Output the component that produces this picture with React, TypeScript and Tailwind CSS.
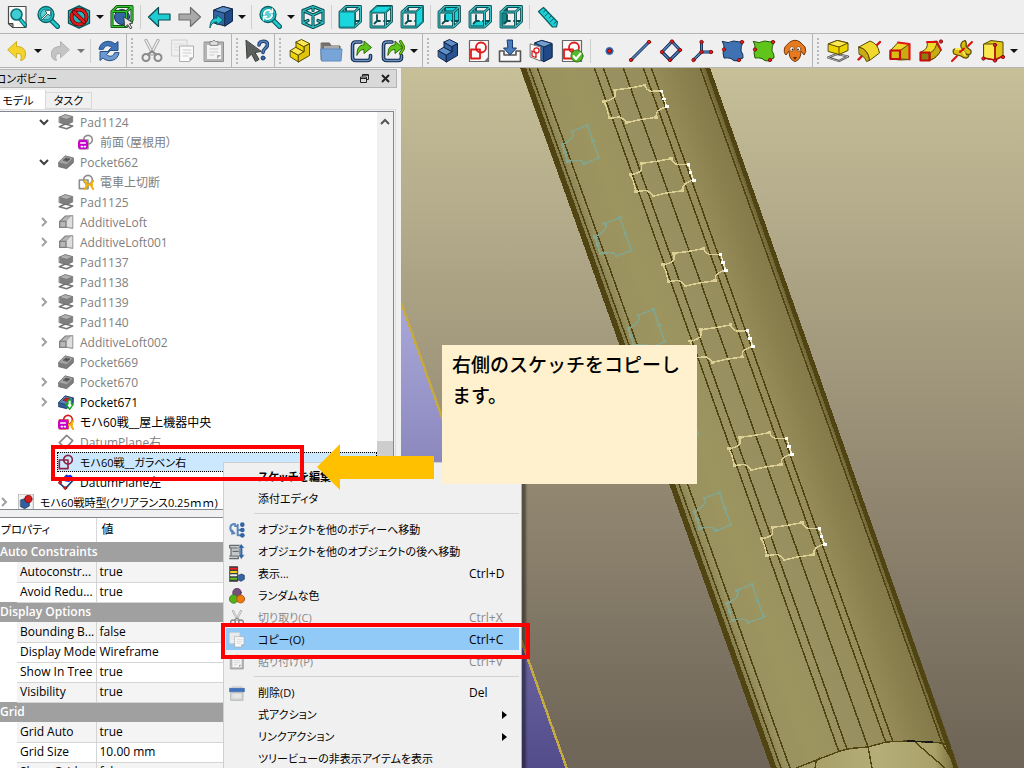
import React from "react";

type Kids = { children?: React.ReactNode };

const Ico = ({ children, s = 24 }: Kids & { s?: number }) => (
  <svg width={s} height={s} viewBox="0 0 24 24" fill="none" strokeLinejoin="round" strokeLinecap="round" aria-hidden="true" className="shrink-0">
    {children}
  </svg>
);

/* ---------- toolbar icons ---------- */

const Lens = () => (
  <>
    <path d="M15 15l6.500 6.500" stroke="#0b5f62" strokeWidth="5" />
    <path d="M15 15l6.500 6.500" stroke="#22c9cf" strokeWidth="2.600" />
    <circle cx="10" cy="9.500" r="8" fill="#1fc4ca" stroke="#0b5f62" strokeWidth="1.300" />
    <circle cx="10" cy="9.500" r="5.500" fill="#5fcfd2" stroke="#0f8084" />
  </>
);

const FitAll = () => (
  <Ico>
    <path d="M3.500 1.500h17.500v21h-13l-4.500-4z" fill="#fbfbfb" stroke="#4b4b4b" strokeWidth="1.200" />
    <path d="M3.500 18.500h4.500v4z" fill="#8c8c8c" stroke="#444" />
    <path d="M15 14l5 6" stroke="#0b5f62" strokeWidth="4" />
    <path d="M15 14l5 6" stroke="#22c9cf" strokeWidth="2" />
    <circle cx="11.500" cy="9.500" r="5.500" fill="#3fcdd2" stroke="#0b6f73" strokeWidth="1.600" />
  </Ico>
);
const FitSel = () => (
  <Ico>
    <Lens />
    <path d="M5.500 13.500l5.500-5.500-2-2 6-1-1 6-2-2-5.500 5.500z" fill="#fff" stroke="#1c4a4c" strokeWidth=".8" />
  </Ico>
);
const DrawStyle = () => (
  <Ico>
    <path d="M12 .8l10.500 5v12.400l-10.500 5-10.500-5v-12.400z" fill="#1fb9bf" stroke="#0b5558" strokeWidth="1.300" />
    <circle cx="12" cy="12" r="7.500" stroke="#5a0000" strokeWidth="4" />
    <circle cx="12" cy="12" r="7.500" stroke="#dc1c1c" strokeWidth="2.600" />
    <path d="M7 7l10 10" stroke="#5a0000" strokeWidth="4" />
    <path d="M7 7l10 10" stroke="#dc1c1c" strokeWidth="2.600" />
  </Ico>
);
const BoxSel = () => (
  <Ico>
    <circle cx="12" cy="12" r="7.500" fill="#3465a4" stroke="#16305a" />
    <path d="M2 6.500h14.500v15h-14.500zM2 6.500l5-5h15l-5.500 5M22 1.500v14l-5.500 6" stroke="#0d3d0d" strokeWidth="3" />
    <path d="M2 6.500h14.500v15h-14.500zM2 6.500l5-5h15l-5.500 5M22 1.500v14l-5.500 6" stroke="#35c434" strokeWidth="1.500" />
    <path d="M14 12l9 6-3.500.8 2.500 4-2 .9-2.200-4-2.800 2.300z" fill="#e9e9e9" stroke="#444" />
  </Ico>
);
const Arrow = ({ flip, fill, stroke }: { flip?: boolean; fill: string; stroke: string }) => (
  <Ico>
    <path
      d={flip ? "M22.500 12l-10-9.500v6.500h-11.500v6h11.500v6.500z" : "M1.500 12l10-9.500v6.500h11.500v6h-11.500v6.500z"}
      fill={fill}
      stroke={stroke}
      strokeWidth="1.200"
    />
  </Ico>
);
const LinkGo = () => (
  <Ico>
    <path d="M5 5l9-3.500 9.500 2.500v12l-7.500 5-11-3z" fill="#3465a4" stroke="#13294d" />
    <path d="M5 5l9-3.500 9.500 2.500-7.500 4z" fill="#5f8fc8" stroke="#13294d" />
    <path d="M16 8l7.500-4v12l-7.500 5z" fill="#204a87" stroke="#13294d" />
    <path d="M1 22.500c0-7 3-9.500 7-9.500v-3l6 5-6 5v-3c-3.500 0-5.500 1.500-7 5.500z" fill="#22c9cf" stroke="#0b5f62" />
  </Ico>
);
const ZoomSync = () => (
  <Ico>
    <Lens />
    <path d="M6 9a4.200 4.200 0 0 1 7-3M14 10a4.200 4.200 0 0 1-7 3" stroke="#fff" strokeWidth="1.800" />
    <path d="M11.500 7.500h3v-3.500M8.500 11.500h-3v3.500" stroke="#fff" strokeWidth="1.400" />
  </Ico>
);
const IsoCube = () => (
  <Ico>
    {[["#0b4c50", 3.2], ["#2fc6cb", 1.2]].map(([c, w]) => (
      <path key={c} d="M12 1.500l10 4v12.500l-10 4.500-10-4.500v-12.500zM2 5.500l10 4.500 10-4.500M12 10v12.500M12 1.500v4M2 18l5-2.500M22 18l-5-2.500" stroke={c as string} strokeWidth={w} />
    ))}
  </Ico>
);
const Cube = ({ face }: { face: string }) => {
  const faces: Record<string, string> = {
    front: "M2 7h14.500v15h-14.500z",
    top: "M2 7l6-5.500h14.500l-6 5.500z",
    right: "M16.500 7l6-5.500v15l-6 5.500z",
    rear: "M8 2h14v14h-14z",
    bottom: "M2 22l6-6h14.500l-6 6z",
    left: "M2 7l6-5.500v15l-6 5.500z",
  };
  const wire = "M2 7h14.500v15h-14.500zM2 7l6-5.500h14.500l-6 5.500M22.500 1.500v15l-6 5.500";
  const hidden = "M8 1.500v4M8 10v6h3M15 16h7M8 16l-2.500 2.500";
  return (
    <Ico>
      {(face === "rear" || face === "left" || face === "bottom") && <path d={faces[face]} fill={face === "left" ? "#0f8b90" : "#18d3da"} />}
      <path d={hidden} stroke="#0b4c50" strokeWidth="1.800" />
      <path d={wire} stroke="#0b4c50" strokeWidth="2.800" />
      <path d={wire} stroke="#3cc3c8" strokeWidth="1.100" />
      {(face === "front" || face === "top" || face === "right") && <path d={faces[face]} fill="#1bd6dd" stroke="#0d7f84" strokeWidth="1" />}
    </Ico>
  );
};
const Ruler = () => (
  <Ico>
    <path d="M2.500 6.500l5-4 14 14.500-1 5h-4z" fill="#1dd0d8" stroke="#0b5f62" strokeWidth="1.200" />
    <path d="M10 5l-2.500 2M12.500 8l-3.500 3M15.500 10.500l-2.500 2.500M18 13.500l-3.500 3M20.500 16.500l-2.500 2" stroke="#0b5f62" />
  </Ico>
);
const Undo = ({ c = "#f4d32a", e = "#cfae1a", flip }: { c?: string; e?: string; flip?: boolean }) => (
  <Ico>
    <g transform={flip ? "matrix(-1 0 0 1 24 0)" : undefined}>
      <path d="M3 10.500l8.500-8v5c7 0 10.500 4 8.500 11-1 2-2.500 2.500-4.500 3 2-5 0-7.500-4-7v4z" fill={c} stroke={e} />
    </g>
  </Ico>
);
const Refresh = () => (
  <Ico>
    <path d="M2 10c1-8 11-10 16-5l3-2.500v9h-9.500l3-3c-3-3-7-2-8 1.500z" fill="#3f74b8" stroke="#264f87" />
    <path d="M22 14c-1 8-11 10-16 5l-3 2.500v-9h9.500l-3 3c3 3 7 2 8-1.500z" fill="#6c9ad0" stroke="#264f87" />
  </Ico>
);
const Cut = ({ s }: { s?: number }) => (
  <Ico s={s}>
    <path d="M6 1.500l7 13.500M18 1.500l-7 13.500" stroke="#aaa" strokeWidth="3.200" />
    <path d="M6 1.500l7 13.500M18 1.500l-7 13.500" stroke="#eee" strokeWidth="1.400" />
    <circle cx="6" cy="18.500" r="3.500" stroke="#8a8a8a" strokeWidth="2" />
    <circle cx="18" cy="18.500" r="3.500" stroke="#8a8a8a" strokeWidth="2" />
    <path d="M8 15.500l4-3.500 4 3.500" stroke="#8a8a8a" strokeWidth="2" />
  </Ico>
);
const Copy = ({ s }: { s?: number }) => (
  <Ico s={s}>
    <path d="M1 1h15v16h-15z" fill="#efefef" stroke="#cfcfcf" />
    <path d="M3.500 5h10M3.500 8h7M3.500 11h7" stroke="#ddd" />
    <path d="M9 7h13.500v11.500l-4 4h-9.500z" fill="#fafafa" stroke="#adadad" />
    <path d="M12 11h8M12 14h8M12 17h5" stroke="#ccc" />
    <path d="M18.500 22.500v-4h4z" fill="#aaa" />
  </Ico>
);
const Paste = ({ s }: { s?: number }) => (
  <Ico s={s}>
    <path d="M2.500 3h19v19.500h-19z" fill="#b5b5b5" stroke="#8e8e8e" />
    <path d="M5 6h14v14h-14z" fill="#f4f4f4" />
    <path d="M8 6v-3.500h2.500l1.500-1.500 1.500 1.500h2.500v3.500z" fill="#ddd" stroke="#888" />
    <path d="M8 10h8M8 13h8M8 16h4" stroke="#ccc" />
    <path d="M15 20v-4h4z" fill="#aaa" />
  </Ico>
);
const WhatsThis = () => (
  <Ico>
    <path d="M1 1.500l1 18 4.500-4.500 4 7.500 3.500-2-4-7 6-1z" fill="#5b605c" stroke="#3b3f3c" />
    <path d="M14 6c0-5 8.500-5 8.500-.5 0 3.500-4.500 4-4.500 8" stroke="#1d3c6e" strokeWidth="3.600" />
    <path d="M14 6c0-5 8.500-5 8.500-.5 0 3.500-4.500 4-4.500 8" stroke="#5182bd" strokeWidth="1.600" />
    <circle cx="18" cy="19" r="2" fill="#3465a4" stroke="#1d3c6e" />
  </Ico>
);
const Step = ({ a, b, c, e }: { a: string; b: string; c: string; e: string }) => (
  <Ico>
    <path d="M2.500 11.500l8 4.500v7l-8-5z" fill={b} stroke={e} />
    <path d="M10.500 16l5.500-3.500v-5l5.500-3v12l-11 6.500z" fill={a} stroke={e} />
    <path d="M2.500 11.500l5.500-3.500 8 4.500-5.500 3.500z" fill={c} stroke={e} />
    <path d="M8 8v-5l8 4.500v5z" fill={b} stroke={e} />
    <path d="M8 3l5.500-2.500 8 4-5.500 3z" fill={c} stroke={e} />
  </Ico>
);
const Folder = () => (
  <Ico>
    <path d="M2.500 4h8l1.500 3h9v14h-18.500z" fill="#76726b" stroke="#66625c" />
    <path d="M5 7h15v4h-15z" fill="#a9a9a9" />
    <path d="M2 10h21l-1 12h-19z" fill="#78a4d8" stroke="#5e8cc4" />
  </Ico>
);
const LinkOut = ({ dbl }: { dbl?: boolean }) => (
  <Ico>
    <path d="M11 3h-5q-3.500 0-3.500 3.500v12q0 3 3.500 3h11q3.500 0 3.500-3v-2" stroke="#13294d" strokeWidth="3.600" />
    <path d="M11 3h-5q-3.500 0-3.500 3.500v12q0 3 3.500 3h11q3.500 0 3.500-3v-2" stroke="#6b93c5" strokeWidth="1.400" />
    <path d="M7 16c0-7 2-10 7-10v-4l7.500 6.500-7.500 6v-4c-3 0-4.500 1.500-7 5.500z" fill="#5fc51a" stroke="#2b6a05" />
    {dbl && <path d="M19.500 2.500l3.500 6-3.500 6" stroke="#2b6a05" strokeWidth="3" />}
    {dbl && <path d="M19.500 2.500l3.500 6-3.500 6" stroke="#73d216" strokeWidth="1.300" />}
  </Ico>
);
const Sheet = ({ ok }: { ok?: boolean }) => (
  <Ico>
    <path d="M2.500 1.500h19v21h-19z" fill="#fafafa" stroke="#666" strokeWidth="1.200" />
    <path d="M17 22.500l4.500-5v5z" fill="#777" />
    <path d="M4 10.500h9v9h-9z" stroke="#e01b1b" strokeWidth="1.800" />
    <circle cx="14" cy="8.500" r="5" stroke="#e01b1b" strokeWidth="1.800" />
    {ok && <circle cx="17" cy="17" r="6" fill="#56b82c" stroke="#2f7b12" />}
    {ok && <path d="M13.500 17l2.500 3 4.500-5.500" stroke="#fff" strokeWidth="2" />}
  </Ico>
);
const Import = () => (
  <Ico>
    <path d="M6 12h-4.500v10.500h21v-10.500h-4.500v4h-12z" fill="#fafafa" stroke="#555" strokeWidth="1.600" />
    <path d="M9.500 1h5v8h4l-6.500 7-6.500-7h4z" fill="#4a7dbd" stroke="#1d3c6e" />
  </Ico>
);
const MapSketch = () => (
  <Ico>
    <path d="M6 4l7-2.500 10 3v14l-8 4-9-3z" fill="#3465a4" stroke="#13294d" />
    <path d="M15 8l8-3.500v14l-8 4z" fill="#204a87" stroke="#13294d" />
    <path d="M6 4l9 4 8-3.500-10-3z" fill="#729fcf" stroke="#13294d" />
    <path d="M1.500 5l10 3v14l-10-4z" fill="#fafafa" stroke="#777" />
    <path d="M3 12l4 1.500v5l-4-1.500z" stroke="#e01b1b" strokeWidth="1.300" />
    <circle cx="7.500" cy="11.500" r="2.600" stroke="#e01b1b" strokeWidth="1.300" />
  </Ico>
);
const Dot = ({ x, y, r = 1.7 }: { x: number; y: number; r?: number }) => <circle cx={x} cy={y} r={r} fill="#e52020" stroke="#7a0707" strokeWidth=".8" />;
const DPoint = () => (
  <Ico>
    <circle cx="12.500" cy="12" r="3.600" fill="#2f5ea0" stroke="#3d70b4" />
    <Dot x={12.5} y={12} r={2} />
  </Ico>
);
const DLine = () => (
  <Ico>
    <path d="M3.500 20.500l17-17" stroke="#13294d" strokeWidth="3" />
    <path d="M3.500 20.500l17-17" stroke="#5486c4" strokeWidth="1.500" />
    <Dot x={3} y={21} />
    <Dot x={21} y={3} />
  </Ico>
);
const DPlane = () => (
  <Ico>
    <path d="M13 2.500l8 8.500-10 10-8-8z" stroke="#13294d" strokeWidth="3.200" />
    <path d="M13 2.500l8 8.500-10 10-8-8z" stroke="#5486c4" strokeWidth="1.400" />
    <Dot x={13} y={2.5} />
    <Dot x={21} y={11} />
    <Dot x={11} y={21} />
    <Dot x={3} y={13} />
  </Ico>
);
const DCs = () => (
  <Ico>
    <path d="M11.500 13v-10M11.500 13h10M11.500 13l-8 8" stroke="#13294d" strokeWidth="3" />
    <path d="M11.500 13v-10M11.500 13h10M11.500 13l-8 8" stroke="#5486c4" strokeWidth="1.300" />
    <Dot x={11.5} y={3} />
    <Dot x={21} y={13} />
    <Dot x={3.5} y={21} />
    <Dot x={11.5} y={13} />
  </Ico>
);
const Binder = ({ c, e }: { c: string; e: string }) => (
  <Ico>
    <path d="M1.500 2.500q6 2.500 11-.5 5 1 9.500 1-2.500 5-2 9 2.500 3 2 7-3.500.5-4 3-6 .5-8-2.500-3-1-7-.5-2-6 0-9 .5-3-1.500-7.500z" fill={c} stroke={e} />
    <Dot x={21} y={3} />
    <Dot x={3} y={10.5} />
    <Dot x={18} y={21} />
  </Ico>
);
const Sheep = () => (
  <Ico>
    <path d="M7 3q5-3.500 10 0l5 5q2 5-1 8l-3-4q0 9-6 10.500-6-1.500-6-10.500l-3 4q-3-3-1-8z" fill="#e87a1d" stroke="#70350a" />
    <circle cx="9" cy="10" r="2.300" fill="#fff" stroke="#70350a" strokeWidth=".6" />
    <circle cx="15.500" cy="10" r="2.300" fill="#fff" stroke="#70350a" strokeWidth=".6" />
    <circle cx="9.500" cy="10.500" r=".9" fill="#222" />
    <circle cx="15" cy="10.500" r=".9" fill="#222" />
    <path d="M10 18h4l-2 3z" fill="#5a2a08" />
  </Ico>
);
const Pad = () => (
  <Ico>
    <path d="M2 18.500l9-3.500 11 2.500-9 4.500z" stroke="#444" strokeWidth="2.200" />
    <path d="M2 18.500l9-3.500 11 2.500-9 4.500z" stroke="#ccc" strokeWidth=".8" />
    <path d="M2.500 5l9-3.500 10.500 2.500v7.500l-9 4-10.500-3z" fill="#edd400" stroke="#5a4a02" />
    <path d="M2.500 5l10.500 3 9-4-10.500-2.500zM13 8v7.500" fill="#fce94f" stroke="#5a4a02" />
  </Ico>
);
const Revolve = () => (
  <Ico>
    <path d="M1.500 20.500l5-5" stroke="#d11" strokeWidth="2.400" />
    <path d="M19 7l4-4" stroke="#d11" strokeWidth="2.400" />
    <path d="M2 8l11-6q8 2.500 9.500 12l-10 7.500q-1-11-10.500-13.500z" fill="#f0d92c" stroke="#5a4a02" />
    <path d="M2 8q9.500 2.500 10.500 13.500l-3 1q-2.500-6-7-7z" fill="#c9ab12" stroke="#5a4a02" />
  </Ico>
);
const Loft = () => (
  <Ico>
    <path d="M2.500 11.500l7.500-8 11.500 1.500v15.500l-9 .5-10-1z" fill="#f0d92c" stroke="#5a4a02" />
    <path d="M12 11.500l9.500-6.500v15.500l-9.500-.5z" fill="#c9ab12" stroke="#5a4a02" />
    <path d="M10 3.500l11.500 1.500v15.500" stroke="#e01b1b" strokeWidth="2.200" />
    <path d="M2.500 11.500h9.500v8.500h-9.500z" fill="#d8bb14" stroke="#c40d0d" strokeWidth="2.200" />
  </Ico>
);
const Pipe = () => (
  <Ico>
    <path d="M2 13q8-3 6-10l10-1q1 7 4 9-4 8-11 10.500z" fill="#f0d92c" stroke="#5a4a02" />
    <path d="M18 3q1 6 4 8-4 8-11 10v-7q6-3 7-11z" fill="#c9ab12" stroke="#5a4a02" />
    <path d="M8 3h10l4 8" stroke="#d11" strokeWidth="1.800" />
    <path d="M1.500 13.500h9v8h-9z" fill="#8f7a10" stroke="#c40d0d" strokeWidth="2.200" />
    <Dot x={22} y={2.5} />
  </Ico>
);
const Helix = () => (
  <Ico>
    <path d="M4 15q-3-5 3-5.500l12 7q-2 5-8 .5zM11 8q-1-5 4-6.500 2 2 1 6l5 4q1 5-5 4z" fill="#d9bc16" stroke="#5a4a02" strokeWidth="1.200" />
    <path d="M6 10q6-1 9 6" stroke="#fce94f" strokeWidth="2" />
    <path d="M2 22l5-5M10 13l4-3.500M18 7l4-4" stroke="#d11" strokeWidth="2" />
  </Ico>
);
const Prim = () => (
  <Ico>
    <path d="M3 5l7-3.500 12 1.500v14l-8 4-11-2z" fill="#e0c51a" stroke="#5a4a02" />
    <path d="M3 5h11v16l-11-2z" fill="#fce94f" stroke="#5a4a02" />
    <path d="M14 5v16l-11-2M14 21l8-4" stroke="#b50f0f" strokeWidth="1.600" />
    <Dot x={14} y={6} />
    <Dot x={2.5} y={19.5} />
    <Dot x={14} y={21.5} />
    <Dot x={22} y={18} />
  </Ico>
);

/* ---------- toolbar parts ---------- */

const Tool = ({ label, children }: Kids & { label: string }) => (
  <button type="button" aria-label={label} className="flex h-8 w-[31px] shrink-0 items-center justify-center">
    {children}
  </button>
);
const Drop = ({ dim }: { dim?: boolean }) => (
  <button type="button" aria-label="more" className="flex h-8 w-3 shrink-0 items-center justify-center">
    <svg width="8" height="4" viewBox="0 0 8 4" aria-hidden="true">
      <path d="M0 0h8l-4 4z" fill={dim ? "#777" : "#111"} />
    </svg>
  </button>
);
const Sep = () => (
  <div className="flex h-6 w-[6px] shrink-0 justify-center">
    <div className="w-px bg-[#cfcfcf]" />
  </div>
);
const Grip = () => (
  <div className="flex h-full w-3 shrink-0 items-center gap-1 pl-[2px]">
    <div className="h-full w-px bg-[#b4b4b4]" />
    <div className="flex flex-col gap-[2px]">
      {Array.from({ length: 7 }, (_, i) => (
        <div key={i} className="h-[2px] w-[2px] bg-[#b9b9b9]" />
      ))}
    </div>
  </div>
);

const Toolbars = () => (
  <header className="shrink-0 bg-[#efefef]">
    <div className="flex h-[34px] items-center border-b border-[#b4b4b4] pl-px">
      <Tool label="Fit all"><FitAll /></Tool>
      <Tool label="Fit selection"><FitSel /></Tool>
      <Tool label="Draw style"><DrawStyle /></Tool>
      <Drop />
      <Tool label="Box selection"><BoxSel /></Tool>
      <Sep />
      <Tool label="Back"><Arrow fill="#1fccd3" stroke="#0b4c50" /></Tool>
      <Tool label="Forward"><Arrow flip fill="#a9a9a9" stroke="#6f6f6f" /></Tool>
      <Tool label="Go to linked object"><LinkGo /></Tool>
      <Drop />
      <Sep />
      <Tool label="Sync view"><ZoomSync /></Tool>
      <Drop />
      <Tool label="Isometric"><IsoCube /></Tool>
      <Sep />
      <Tool label="Front"><Cube face="front" /></Tool>
      <Tool label="Top"><Cube face="top" /></Tool>
      <Tool label="Right"><Cube face="right" /></Tool>
      <Sep />
      <Tool label="Rear"><Cube face="rear" /></Tool>
      <Tool label="Bottom"><Cube face="bottom" /></Tool>
      <Tool label="Left"><Cube face="left" /></Tool>
      <Sep />
      <Tool label="Measure"><Ruler /></Tool>
    </div>
    <div className="flex h-[34px] items-center border-b border-[#b4b4b4] pl-px">
      <Tool label="Undo"><Undo /></Tool>
      <Drop />
      <Tool label="Redo"><Undo flip c="#c4c4c4" e="#b0b0b0" /></Tool>
      <Drop dim />
      <Sep />
      <Tool label="Refresh"><Refresh /></Tool>
      <Grip />
      <Tool label="Cut"><Cut /></Tool>
      <Tool label="Copy"><Copy /></Tool>
      <Tool label="Paste"><Paste /></Tool>
      <Grip />
      <Tool label="What's this"><WhatsThis /></Tool>
      <Grip />
      <Tool label="Part"><Step a="#dfc30c" b="#edd400" c="#fce94f" e="#5a4a02" /></Tool>
      <Tool label="Group"><Folder /></Tool>
      <Tool label="Make link"><LinkOut /></Tool>
      <Tool label="Make sub-link"><LinkOut dbl /></Tool>
      <Drop />
      <Grip />
      <Tool label="Body"><Step a="#27528f" b="#3465a4" c="#5f8fc8" e="#0f2345" /></Tool>
      <Tool label="New sketch"><Sheet /></Tool>
      <Tool label="Import"><Import /></Tool>
      <Tool label="Map sketch"><MapSketch /></Tool>
      <Tool label="Validate sketch"><Sheet ok /></Tool>
      <Sep />
      <Tool label="Datum point"><DPoint /></Tool>
      <Tool label="Datum line"><DLine /></Tool>
      <Tool label="Datum plane"><DPlane /></Tool>
      <Tool label="Local coordinates"><DCs /></Tool>
      <Tool label="Shape binder"><Binder c="#3f72b2" e="#142b52" /></Tool>
      <Tool label="Sub-shape binder"><Binder c="#5fc51a" e="#235a05" /></Tool>
      <Tool label="Clone"><Sheep /></Tool>
      <Grip />
      <Tool label="Pad"><Pad /></Tool>
      <Tool label="Revolution"><Revolve /></Tool>
      <Tool label="Loft"><Loft /></Tool>
      <Tool label="Pipe"><Pipe /></Tool>
      <Tool label="Helix"><Helix /></Tool>
      <Tool label="Primitive"><Prim /></Tool>
      <Drop />
    </div>
  </header>
);

/* ---------- model tree ---------- */

const TPad = () => (
  <Ico s={16}>
    <path d="M2 19l9-4 11 3-9 4z" stroke="#777" strokeWidth="2.400" />
    <path d="M2 5l9-4 11 3v8l-9 4-11-3z" fill="#7f7f7f" stroke="#6a6a6a" />
    <path d="M2 5l11 3 9-4-11-3z" fill="#b0b0b0" stroke="#777" />
  </Ico>
);
const TPocket = ({ live }: { live?: boolean }) => (
  <Ico s={16}>
    <path d="M1 13l10-10 12 3v7l-10 9-12-3z" fill={live ? "#2f5f9f" : "#7d7d7d"} stroke={live ? "#16305a" : "#6a6a6a"} strokeWidth="1.200" />
    <path d="M1 13l12 3 10-10-12-3z" fill={live ? "#5f86b5" : "#a5a5a5"} stroke={live ? "#16305a" : "#777"} />
    <path d="M8 9l4-3 6 1.500-4 3.500z" fill={live ? "#d11f1f" : "#555"} stroke={live ? "#900" : "#555"} />
    {live && <path d="M15 9h5v6h3l-5.500 8-5.500-8h3z" fill="#fff" stroke="#10a81c" strokeWidth="2" />}
  </Ico>
);
const TLoft = () => (
  <Ico s={16}>
    <path d="M2.500 11l8.500-8 11-.5v19l-10-1.500h-9.500z" fill="#b5b5b5" stroke="#858585" strokeWidth="1.600" />
    <path d="M12 11l7-8h3v18l-10-1.500z" fill="#dedede" stroke="#999" />
    <path d="M2.500 11h9.500v9h-9.500z" fill="#b8b8b8" stroke="#808080" strokeWidth="2" />
  </Ico>
);
const TSketch = ({ c, kind }: { c: string; kind?: "mag" | "gold" | "both" }) => (
  <Ico s={16}>
    <path d="M2 9h13v13h-13z" stroke={c} strokeWidth="2.400" />
    <circle cx="15" cy="8.500" r="6.500" stroke={c} strokeWidth="2.400" />
    {(kind === "gold" || kind === "both") && <path d="M10 10q6 6 0 13M23 10q-6 6 0 13M12 16h9" stroke="#f2b10a" strokeWidth="3.200" />}
    {(kind === "mag" || kind === "both") && (
      <>
        <rect x="0" y="8.500" width="15" height="14.500" rx="5" fill="#c800c8" />
        <path d="M4 13.500h7M5 19h1.500M9.500 19h1.500" stroke="#fff" strokeWidth="2.400" />
      </>
    )}
  </Ico>
);
const TPlane = ({ live }: { live?: boolean }) => (
  <Ico s={16}>
    <path d="M13 2l9 8-11 12-9-9z" fill="#fff" stroke={live ? "#27427a" : "#8a8a8a"} strokeWidth="2.600" />
    {live && <path d="M12 3l7-2 3 3-5 8-7-1z" fill="#0b2bff" />}
    {live && <><Dot x={3} y={13} r={2.2} /><Dot x={11} y={21} r={2.2} /></>}
  </Ico>
);
const TBody = () => (
  <Ico s={16}>
    <path d="M1 0h22v24h-22z" fill="#f2f2f2" stroke="#8a8a8a" />
    <path d="M4 9l6-2 7 3v8l-7 4-6-3z" fill="#2f5f9f" stroke="#16305a" />
    <circle cx="15.500" cy="7.500" r="5.500" fill="#d11f1f" stroke="#700" />
  </Ico>
);
const Chevron = ({ open }: { open?: boolean }) => (
  <svg width="10" height="10" viewBox="0 0 10 10" fill="none" aria-hidden="true">
    <path d={open ? "M1 3l4 4 4-4" : "M3 1l4 4-4 4"} stroke={open ? "#404040" : "#a0a0a0"} strokeWidth="2" />
  </svg>
);

type Node = { t: string; icon: React.ReactNode; lvl?: number; chev?: "o" | "c"; live?: boolean; sel?: boolean; kana?: boolean };
const nodes: Node[] = [
  { t: "Pad1124", icon: <TPad />, chev: "o" },
  { t: "前面（屋根用）", icon: <TSketch c="#8d8d8d" kind="mag" />, lvl: 2 },
  { t: "Pocket662", icon: <TPocket />, chev: "o" },
  { t: "電車上切断", icon: <TSketch c="#8d8d8d" kind="gold" />, lvl: 2 },
  { t: "Pad1125", icon: <TPad /> },
  { t: "AdditiveLoft", icon: <TLoft />, chev: "c" },
  { t: "AdditiveLoft001", icon: <TLoft />, chev: "c" },
  { t: "Pad1137", icon: <TPad /> },
  { t: "Pad1138", icon: <TPad /> },
  { t: "Pad1139", icon: <TPad />, chev: "c" },
  { t: "Pad1140", icon: <TPad /> },
  { t: "AdditiveLoft002", icon: <TLoft />, chev: "c" },
  { t: "Pocket669", icon: <TPocket /> },
  { t: "Pocket670", icon: <TPocket />, chev: "c" },
  { t: "Pocket671", icon: <TPocket live />, chev: "c", live: true },
  { t: "モハ60戦__屋上機器中央", icon: <TSketch c="#d11f1f" kind="both" />, live: true },
  { t: "DatumPlane右", icon: <TPlane /> },
  { t: "モハ60戦__ガラベン右", icon: <TSketch c="#8c2340" />, live: true, sel: true, kana: true },
  { t: "DatumPlane左", icon: <TPlane live />, live: true },
  { t: "モハ60戦時型(クリアランス0.25ｍｍ)", icon: <TBody />, lvl: 0, chev: "c", live: true, kana: true },
];
const indents = ["-ml-[6px]", "ml-[34px]", "ml-[54px]"];

const Tree = () => (
  <div className="flex h-[399px] border border-l-0 border-[#828790] bg-white">
    <ul className="min-w-0 flex-1 overflow-hidden">
      {nodes.map((n) => (
        <li key={n.t} className={`flex h-5 items-center ${n.live ? "text-black" : "text-[#808080]"}`}>
          <span className={`mr-[3px] flex w-5 shrink-0 justify-center ${indents[n.lvl ?? 1]}`}>{n.chev && <Chevron open={n.chev === "o"} />}</span>
          <span className={`flex h-5 min-w-0 flex-1 items-center gap-[6px] border border-dotted ${n.sel ? "border-black bg-[#cce8ff]" : "border-transparent"}`}>
            {n.icon}
            <span className={`pt-[2px] whitespace-nowrap ${n.kana ? "text-[11px]" : ""}`}>{n.t}</span>
          </span>
        </li>
      ))}
    </ul>
    <div className="flex w-4 shrink-0 flex-col items-center bg-[#f0f0f0]">
      <svg width="10" height="18" viewBox="0 0 10 18" fill="none" aria-hidden="true">
        <path d="M1 12l4-4 4 4" stroke="#555" strokeWidth="2" />
      </svg>
      <div className="mt-[311px] h-[34px] w-full bg-[#cdcdcd]" />
    </div>
  </div>
);

/* ---------- properties ---------- */

const props: [string, string?][] = [
  ["Auto Constraints"],
  ["Autoconstr...", "true"],
  ["Avoid Redu...", "true"],
  ["Display Options"],
  ["Bounding B...", "false"],
  ["Display Mode", "Wireframe"],
  ["Show In Tree", "true"],
  ["Visibility", "true"],
  ["Grid"],
  ["Grid Auto", "true"],
  ["Grid Size", "10.00 mm"],
  ["Show Grid", "false"],
];
const striped = ["Autoconstr...", "Bounding B...", "Visibility", "Grid Auto", "Show Grid"];

const Properties = () => (
  <div className="mt-[7px] min-h-0 flex-1 overflow-hidden border-t border-r border-[#828790] bg-white">
    <table className="w-full table-fixed border-collapse text-black">
      <colgroup>
        <col className="w-[17px]" />
        <col className="w-[79px]" />
        <col />
      </colgroup>
      <thead>
        <tr className="h-6">
          <th colSpan={2} className="border-r border-[#d8d8d8] p-0 pl-px text-left text-[11px] font-normal">プロパティ</th>
          <th className="p-0 pl-[5px] text-left font-normal">値</th>
        </tr>
      </thead>
      <tbody>
        {props.map(([k, v]) =>
          v === undefined ? (
            <tr key={k} className="h-5 bg-[#a0a0a0] text-white">
              <th colSpan={3} className="p-0 text-left leading-4 font-semibold">{k}</th>
            </tr>
          ) : (
            <tr key={k} className="h-5">
              <td className="bg-white p-0" />
              <td className={`border-r border-b border-[#d4d4d4] p-0 pl-[3px] leading-4 whitespace-nowrap ${striped.includes(k) ? "bg-[#f4f4f4]" : "bg-white"}`}>{k}</td>
              <td className={`border-b border-[#d4d4d4] p-0 pl-[3px] leading-4 ${striped.includes(k) ? "bg-[#f4f4f4]" : "bg-white"}`}>{v}</td>
            </tr>
          ),
        )}
      </tbody>
    </table>
  </div>
);

const ComboView = () => (
  <aside className="flex w-[401px] shrink-0 flex-col overflow-hidden bg-[#f0f0f0] pt-px pr-1">
    <div className="flex h-[19px] shrink-0 items-center border border-l-0 border-[#b4b4b4] bg-[#d9d9d9] pr-[6px]">
      <h2 className="-ml-1 flex-1 pt-px text-[11px] whitespace-nowrap text-black">コンボビュー</h2>
      <button type="button" aria-label="Float" className="mr-3">
        <svg width="9" height="9" viewBox="0 0 9 9" fill="none" stroke="#222" aria-hidden="true">
          <path d="M2.500 2.500v-2h6v5h-2M.5 3h6v5.500h-6zM.5 4.500h6M2.500 1.200h6" />
        </svg>
      </button>
      <button type="button" aria-label="Close">
        <svg width="9" height="9" viewBox="0 0 9 9" stroke="#222" strokeWidth="2" aria-hidden="true">
          <path d="M1 1l7 7M8 1l-7 7" />
        </svg>
      </button>
    </div>
    <div role="tablist" className="mt-[2px] flex h-[19px] shrink-0 items-end text-[11px] text-black">
      <button type="button" role="tab" aria-selected="true" className="h-[19px] w-[46px] border-r border-[#d9d9d9] bg-white pt-[2px] pr-[9px] text-center leading-4">モデル</button>
      <button type="button" role="tab" aria-selected="false" className="h-[17px] w-[46px] border border-l-0 border-[#d9d9d9] text-center leading-4">タスク</button>
    </div>
    <div className="mr-px flex min-h-0 flex-1 flex-col border-t border-r border-[#dcdcdc] pt-px pr-px">
      <div className="shrink-0"><Tree /></div>
      <Properties />
    </div>
  </aside>
);

/* ---------- 3D view ---------- */

const creamAt = [[312, 107], [392, 327], [489, 597], [570, 826], [687, 1149], [785, 1419]];
const tealAt = [[262, 178], [360, 455], [460, 730], [559, 1005], [658, 1279], [756, 1555]];

const View3D = () => (
  <main className="min-w-0 flex-1 overflow-hidden bg-linear-to-b from-[#c6bf98] via-[#9b9178] to-[#6e6457]">
    <svg className="h-full w-full" viewBox="401 68 623 700" preserveAspectRatio="xMinYMin slice" fill="none" shapeRendering="crispEdges" role="img" aria-label="3D view">
      <defs>
        <linearGradient id="body" gradientUnits="userSpaceOnUse" x1="520" y1="68" x2="688" y2="8">
          <stop offset="0" stopColor="#7d7444" />
          <stop offset=".09" stopColor="#99915f" />
          <stop offset=".25" stopColor="#9c955f" />
          <stop offset=".5" stopColor="#989060" />
          <stop offset=".68" stopColor="#968d5a" />
          <stop offset=".85" stopColor="#8a804e" />
          <stop offset=".95" stopColor="#847a4a" />
          <stop offset="1" stopColor="#5b5220" />
        </linearGradient>
        <linearGradient id="plane" x1="0" y1="0" x2="0" y2="1">
          <stop offset="0" stopColor="#aaa8da" />
          <stop offset="1" stopColor="#534c8b" />
        </linearGradient>
        <linearGradient id="cap" x1="0" y1="0" x2="1" y2="0">
          <stop offset="0" stopColor="#a39a63" />
          <stop offset=".5" stopColor="#b5ae79" />
          <stop offset=".85" stopColor="#aaa169" />
          <stop offset="1" stopColor="#6d6430" />
        </linearGradient>
      </defs>
      <path d="M401 301L567 768H401z" fill="url(#plane)" />
      <path d="M401 302L567 769" stroke="#c5aa42" strokeWidth="2.500" />
      <path d="M520 68H709L959 768H772z" fill="url(#body)" />
      <path d="M796 768L840 751 868 747 886 742 907 741 942 743 951 747 959 768z" fill="url(#cap)" />
      <g stroke="#4f4412">
        <path d="M522.500 66L774.500 770" strokeWidth="5.500" />
        <path d="M707 66L956 768" strokeWidth="4.500" />
        <path d="M529 67L781 768M537 67L790 768M700 67L942 743M594 67L839 752M603 67L847 749M623 67L868 747M643 67L886 743M651 67L893 742" strokeWidth="1.500" />
        <path d="M796 768L840 751 850 748.500 868 747 886 742 907 741 942 743 951 747M868 747L872 768M815 768L816 762 820 757M915 742L945 768M942 743L957 768" strokeWidth="1.400" />
        <path d="M907 741L933 742" stroke="#181818" strokeWidth="1.600" />
      </g>
      <g transform="matrix(.33333 0 0 .33333 500 66)">
        {creamAt.map(([x, y]) => (
          <g key={x} transform={`translate(${x - 312} ${y - 107})`}>
            <path d="M312 107Q342 100 345 90L345 72L390 66L433 58Q440 72 452 76L485 75L500 122Q475 130 470 140L468 154L420 161L380 170Q372 158 358 153L328 157L320 125z" stroke="#dccf93" strokeWidth="4.500" />
            <path d="M307 102h10v8h-10zM340 68h10v8h-10zM428 53h10v8h-10zM323 152h10v8h-10zM375 166h10v8h-10zM463 150h10v8h-10z" fill="#dccf93" />
            <path d="M485 75L492 98 500 122" stroke="#efe8c8" strokeWidth="4" />
            <path d="M480 71h10v8h-10zM487 95h10v8h-10zM496 118h11v9h-11z" fill="#fff" />
          </g>
        ))}
        {tealAt.map(([x, y]) => (
          <g key={x} transform={`translate(${x - 262} ${y - 178})`}>
            <path d="M262 178L279 228 297 276 252 293Q244 281 230 283L202 285 195 260 187 236Q216 222 221 205L216 196z" stroke="#83a58d" strokeWidth="4.500" />
            <path d="M257 173h10v10h-10zM274 223h10v8h-10zM292 271h8v8h-8zM247 289h10v8h-10zM198 281h10v10h-10zM190 255h10v8h-10zM182 231h10v10h-10zM212 192h10v8h-10z" fill="#83a58d" />
          </g>
        ))}
      </g>
    </svg>
  </main>
);

/* ---------- context menu ---------- */

const MoveBody = () => (
  <Ico s={16}>
    <path d="M9 3q-7 0-7 6 0 5 5 7M9 6h4M13 4v16h5M13 12h5" stroke="#5b86ba" strokeWidth="3" />
    <path d="M5 11l5 7-7 1z" fill="#5b86ba" />
    <circle cx="20" cy="4" r="3.500" fill="#3465a4" />
    <circle cx="20" cy="12" r="3.500" fill="#3465a4" />
    <circle cx="20" cy="20" r="3.500" fill="#3465a4" />
  </Ico>
);
const MoveAfter = () => (
  <Ico s={16}>
    <path d="M1 2h17v4h-17zM3 6h13v12h-13zM6 11h8M1 18h13v4h-13" fill="#c4c8c8" stroke="#666c6c" strokeWidth="1.800" />
    <path d="M18.500 0l5 6h-3v10h3l-5 7-5-7h3v-10h-3z" fill="#3465a4" stroke="#e6e6e6" strokeWidth=".8" />
  </Ico>
);
const Appearance = () => (
  <Ico s={16}>
    <path d="M1 1h12v22h-12z" fill="#3b3f40" stroke="#222" />
    <path d="M3 4h8" stroke="#e22" strokeWidth="3" />
    <path d="M3 9h8" stroke="#f3d21b" strokeWidth="3" />
    <path d="M3 14h8" stroke="#eee" strokeWidth="3" />
    <path d="M3 19h8" stroke="#63c21c" strokeWidth="3" />
    <path d="M14 14l5-2 4 2v6l-5 3-4-2z" fill="#3465a4" stroke="#16305a" />
  </Ico>
);
const Colors = () => (
  <Ico s={16}>
    <circle cx="12" cy="7" r="6.500" fill="#75507b" stroke="#4b2c52" />
    <circle cx="7" cy="16.500" r="6.500" fill="#56b01c" stroke="#2f6a08" />
    <circle cx="17.500" cy="16.500" r="6" fill="#ee7a12" stroke="#a3480a" />
  </Ico>
);
const Delete = () => (
  <Ico s={16}>
    <path d="M4 1h16v4h-16z" fill="#ddd" />
    <path d="M1 5h22v5h-22z" fill="#3f74c0" stroke="#2c5ba0" />
    <path d="M3 11h18v12h-18z" fill="#d5d7d8" stroke="#a2a6a8" />
    <path d="M6 15h12M6 18h12" stroke="#f5f5f5" strokeWidth="1.500" />
  </Ico>
);

type Item = { t: string; icon?: React.ReactNode; k?: string; bold?: boolean; dim?: boolean; hot?: boolean; sub?: boolean } | null;
const items: Item[] = [
  { t: "スケッチを編集", bold: true },
  { t: "添付エディタ" },
  null,
  { t: "オブジェクトを他のボディーへ移動", icon: <MoveBody /> },
  { t: "オブジェクトを他のオブジェクトの後へ移動", icon: <MoveAfter /> },
  { t: "表示...", icon: <Appearance />, k: "Ctrl+D" },
  { t: "ランダムな色", icon: <Colors /> },
  { t: "切り取り(C)", icon: <Cut s={16} />, k: "Ctrl+X", dim: true },
  { t: "コピー(O)", icon: <Copy s={16} />, k: "Ctrl+C", hot: true },
  { t: "貼り付け(P)", icon: <Paste s={16} />, k: "Ctrl+V", dim: true },
  null,
  { t: "削除(D)", icon: <Delete />, k: "Del" },
  { t: "式アクション", sub: true },
  { t: "リンクアクション", sub: true },
  { t: "ツリービューの非表示アイテムを表示" },
];

const ContextMenu = () => (
  <div role="menu" className="absolute top-[462px] left-[223px] w-[299px] border border-[#cfcfcf] border-r-[#b0b0b0] bg-[#f0f0f0] p-[2px] shadow-[4px_4px_2px_rgba(0,0,0,0.4)]">
    {items.map((it, i) =>
      it === null ? (
        <div key={i} className="flex h-[9px] items-center pl-7">
          <div className="h-px flex-1 bg-[#d2d2d2]" />
        </div>
      ) : (
        <button
          key={i}
          type="button"
          role="menuitem"
          disabled={it.dim}
          className={`flex h-[22px] w-full items-center pt-px pr-3 pl-[3px] text-left ${it.hot ? "bg-[#91c9f7]" : ""} ${it.dim ? "text-[#8a8a8a]" : "text-black"} ${it.bold ? "font-bold" : ""}`}
        >
          <span className="mr-[13px] flex w-4 shrink-0">{it.icon}</span>
          <span className="flex-1 text-[11px] whitespace-nowrap">{it.t}</span>
          {it.k && <span className="w-[38px] whitespace-nowrap">{it.k}</span>}
          {it.sub && (
            <svg width="5" height="8" viewBox="0 0 5 8" aria-hidden="true">
              <path d="M0 0l5 4-5 4z" fill="#000" />
            </svg>
          )}
        </button>
      ),
    )}
  </div>
);

export default function App() {
  return (
    <div className="relative flex h-screen w-full flex-col overflow-hidden bg-[#f0f0f0] font-['Open_Sans','Noto_Sans_CJK_JP',sans-serif] text-[12px] leading-4 [font-feature-settings:'palt']">
      <Toolbars />
      <div className="flex min-h-0 flex-1">
        <ComboView />
        <View3D />
      </div>
      <ContextMenu />
      <div className="absolute top-[445px] left-[51px] h-9 w-[253px] border-4 border-[#ff0000]" />
      <div className="absolute top-[623px] left-[221px] h-9 w-[309px] border-4 border-[#ff0000]" />
      <svg className="absolute top-[444px] left-[317px]" width="117" height="46" viewBox="0 0 117 46" aria-hidden="true">
        <path d="M0 23L23 0V12H117V35H23V46z" fill="#ffc000" />
      </svg>
      <p className="absolute top-[345px] left-[442px] h-[139px] w-[255px] bg-[#fff1ce] px-[10px] py-[3px] font-['Noto_Sans_CJK_JP',sans-serif] text-[19px] leading-[31px] font-medium text-black [font-feature-settings:normal]">
        右側のスケッチをコピーします。
      </p>
    </div>
  );
}
